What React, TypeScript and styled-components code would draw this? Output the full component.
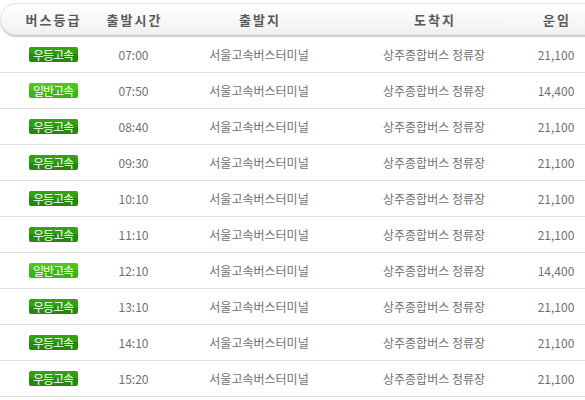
import React from 'react'
import styled, { createGlobalStyle } from 'styled-components'

type Bus = {
  grade: '우등고속' | '일반고속'
  time: string
  from: string
  to: string
  fare: string
}

const buses: Bus[] = [
  { grade: '우등고속', time: '07:00', from: '서울고속버스터미널', to: '상주종합버스 정류장', fare: '21,100' },
  { grade: '일반고속', time: '07:50', from: '서울고속버스터미널', to: '상주종합버스 정류장', fare: '14,400' },
  { grade: '우등고속', time: '08:40', from: '서울고속버스터미널', to: '상주종합버스 정류장', fare: '21,100' },
  { grade: '우등고속', time: '09:30', from: '서울고속버스터미널', to: '상주종합버스 정류장', fare: '21,100' },
  { grade: '우등고속', time: '10:10', from: '서울고속버스터미널', to: '상주종합버스 정류장', fare: '21,100' },
  { grade: '우등고속', time: '11:10', from: '서울고속버스터미널', to: '상주종합버스 정류장', fare: '21,100' },
  { grade: '일반고속', time: '12:10', from: '서울고속버스터미널', to: '상주종합버스 정류장', fare: '14,400' },
  { grade: '우등고속', time: '13:10', from: '서울고속버스터미널', to: '상주종합버스 정류장', fare: '21,100' },
  { grade: '우등고속', time: '14:10', from: '서울고속버스터미널', to: '상주종합버스 정류장', fare: '21,100' },
  { grade: '우등고속', time: '15:20', from: '서울고속버스터미널', to: '상주종합버스 정류장', fare: '21,100' },
]

const App = () => {
  return (
    <>
      <GlobalStyle />
      <Page>
        <Header>
          <HeadCell>버스등급</HeadCell>
          <HeadCell>출발시간</HeadCell>
          <HeadCell>출발지</HeadCell>
          <HeadCell>도착지</HeadCell>
          <HeadCell>운임</HeadCell>
        </Header>
        {buses.map((b, i) => (
          <Row key={i}>
            <Cell>
              <Badge $premium={b.grade === '우등고속'}>{b.grade}</Badge>
            </Cell>
            <Cell>{b.time}</Cell>
            <Cell>{b.from}</Cell>
            <Cell>{b.to}</Cell>
            <Cell>{b.fare}</Cell>
          </Row>
        ))}
      </Page>
    </>
  )
}

export default App

const GlobalStyle = createGlobalStyle`
  html, body {
    margin: 0;
    padding: 0;
    background: #fff;
    overflow: hidden;
  }
  body {
    font-family: "Noto Sans CJK KR", "Noto Sans", sans-serif;
  }
`

// the table is wider than the window; its right end is clipped
const Page = styled.div`
  width: 585px;
  padding-top: 3px;
  overflow: hidden;
`

const Header = styled.div`
  display: grid;
  grid-template-columns: 105px 57px 194px 156px 88px;
  align-items: center;
  width: 600px;
  height: 30px;
  margin-bottom: 2px;
  border: 1px solid #e2e2e2;
  border-radius: 16px;
  background: linear-gradient(#ffffff, #f1f1f1);
  box-shadow: 0 2px 1px #cfcfcf;
`

const HeadCell = styled.div`
  text-align: center;
  font-size: 13px;
  font-weight: bold;
  letter-spacing: 2px;
  color: #5a5a5a;
`

const Row = styled.div`
  display: grid;
  grid-template-columns: 105px 57px 194px 156px 88px;
  align-items: center;
  height: 35px;
  border-bottom: 1px solid #dcdcdc;
`

const Cell = styled.div`
  display: flex;
  justify-content: center;
  font-size: 12px;
  color: #707070;
  white-space: nowrap;
`

const Badge = styled.span<{ $premium: boolean }>`
  display: inline-block;
  width: 49px;
  height: 15px;
  line-height: 15px;
  margin-left: 1px;
  text-align: center;
  font-size: 12px;
  letter-spacing: -1px;
  color: #fff;
  border-radius: 2px;
  background: ${p =>
    p.$premium
      ? 'linear-gradient(#34a412 0%, #2e9c10 50%, #25880a 50%, #25880a 100%)'
      : 'linear-gradient(#52c81c 0%, #48c016 50%, #3db40f 50%, #3db40f 100%)'};
`
